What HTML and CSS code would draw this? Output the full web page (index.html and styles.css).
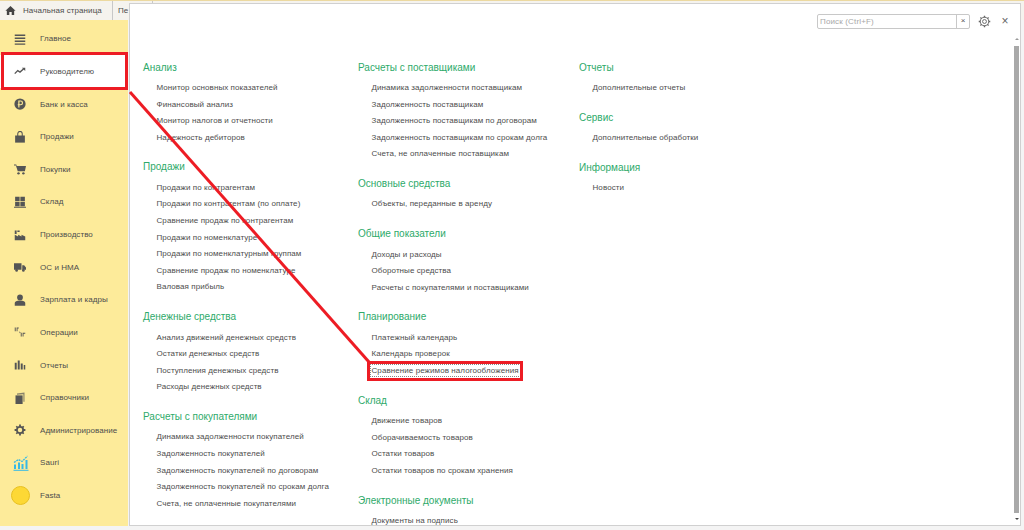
FILE: index.html
```html
<!DOCTYPE html>
<html lang="ru">
<head>
<meta charset="utf-8">
<title>Руководителю</title>
<link rel="stylesheet" href="styles.css">
</head>
<body>
<div class="app">
  <header class="tabs">
    <div class="tab">
      <svg class="home" viewBox="0 0 12 12"><path d="M6 1 L11.500 6.300 L10 6.300 L10 11 L7.300 11 L7.300 7.500 L4.700 7.500 L4.700 11 L2 11 L2 6.300 L.5 6.300 Z"/></svg>
      <span>Начальная страница</span>
    </div>
    <div class="tab tab-second"><span>Пе</span></div>
  </header>
  <div class="body">
    <nav class="side">
      <a class="nav"><svg class="ico" viewBox="0 0 16 16"><path d="M1 2h14v2H1zM1 6h14v2H1zM1 10h14v2H1zM1 14h14v1.500H1z"/></svg><span>Главное</span></a>
      <a class="nav active"><svg class="ico" viewBox="0 0 16 16"><path d="M1 11.500 L5 7.500 L8 9.500 L13 5" fill="none" stroke="#555" stroke-width="1.800"/><path d="M10.500 3.500 L15 3.500 L15 8 Z"/></svg><span>Руководителю</span></a>
      <a class="nav"><svg class="ico" viewBox="0 0 16 16"><circle cx="8" cy="8" r="7.500"/><path d="M6.500 12.500V4h2.300a2.300 2.300 0 0 1 0 5H5" fill="none" stroke="#fdeb95" stroke-width="1.600"/></svg><span>Банк и касса</span></a>
      <a class="nav"><svg class="ico" viewBox="0 0 16 16"><path d="M1.500 6h13v9.500h-13z"/><path d="M5 7V3.500a3 3 0 0 1 6 0V7" fill="none" stroke="#555" stroke-width="1.400"/></svg><span>Продажи</span></a>
      <a class="nav"><svg class="ico" viewBox="0 0 16 16"><path d="M0 2h3l.6 2H16l-1.500 7H5L2.500 3.300H0z"/><circle cx="6" cy="13.800" r="1.600"/><circle cx="12.500" cy="13.800" r="1.600"/></svg><span>Покупки</span></a>
      <a class="nav"><svg class="ico" viewBox="0 0 16 16"><path d="M1.500 1h6v6h-6zM8.500 1h6v6h-6zM1.500 8h6v5.500h-6zM8.500 8h6v5.500h-6zM0 14.300h16v1.500H0z"/></svg><span>Склад</span></a>
      <a class="nav"><svg class="ico" viewBox="0 0 16 16"><path d="M1 15V7.500l4.500 2.500V7.500l4.500 2.500V7.500l5 2.500V15zM1 2h2.500v4.500H1zM4.500 2h3v2h-3z"/></svg><span>Производство</span></a>
      <a class="nav"><svg class="ico" viewBox="0 0 16 16"><path d="M0 3h10v8.500H0zM11 5.500h2.500L16 8.500v3h-5z"/><circle cx="3.500" cy="12.500" r="1.800"/><circle cx="12.500" cy="12.500" r="1.800"/></svg><span>ОС и НМА</span></a>
      <a class="nav"><svg class="ico" viewBox="0 0 16 16"><circle cx="8" cy="4.500" r="3.800"/><path d="M1 15.500v-3.500c0-2 2.500-3.300 7-3.300s7 1.300 7 3.300v3.500z"/></svg><span>Зарплата и кадры</span></a>
      <a class="nav"><svg class="ico" viewBox="0 0 16 16"><path d="M1 2h1.300v5H1zM3.500 2h2.800v1.200H4.700V7H3.500zM9 9h1.300v5H9zM11.500 9h3.500v1.200h-2.300V14h-1.200zM6.500 7l2.500 2-1.200.5z"/></svg><span>Операции</span></a>
      <a class="nav"><svg class="ico" viewBox="0 0 16 16"><path d="M1 5h2.600v9H1zM5 2h2.600v12H5zM9 6h2.600v8H9zM13 8h2v6h-2z"/></svg><span>Отчеты</span></a>
      <a class="nav"><svg class="ico" viewBox="0 0 16 16"><path d="M2 4.500h9.500V16H2z"/><path d="M4 3.500V2L14 .5V13h-1.500V3z" opacity=".7"/></svg><span>Справочники</span></a>
      <a class="nav"><svg class="ico" viewBox="0 0 16 16"><circle cx="8" cy="8" r="4.200" fill="none" stroke="#555" stroke-width="2.400"/><path d="M6.800 .8h2.400v3H6.800zM6.800 12.200h2.400v3H6.800zM.8 6.800h3v2.400h-3zM12.200 6.800h3v2.400h-3z"/><path d="M2.300 3.800l1.500-1.500 2.200 2-1.700 1.700zM13.700 3.800l-1.500-1.500-2.200 2 1.700 1.700zM2.300 12.200l1.500 1.500 2.200-2-1.700-1.700zM13.700 12.200l-1.500 1.500-2.200-2 1.700-1.700z"/></svg><span>Администрирование</span></a>
      <a class="nav nav-sauri"><svg class="ico-lg" viewBox="0 0 16 16"><path d="M.5 15.300h15" stroke="#35b9e6" stroke-width="1" fill="none"/><path d="M1 14V9.500h2V14zM5 14V7.500h2V14zM8.500 14V9h2V14zM12.500 14V5h2V14z" fill="#35b9e6"/><path d="M1 7.500 L5.500 4.500 L9 6.500 L14.500 1" stroke="#35b9e6" stroke-width="1.300" fill="none" stroke-dasharray="2 .8"/></svg><span>Sauri</span></a>
      <a class="nav nav-coin"><span class="coin"></span><span>Fasta</span></a>
    </nav>
    <main class="panel">
      <div class="toolbar">
        <div class="search"><span class="search-text">Поиск (Ctrl+F)</span><span class="search-x">×</span></div>
        <svg class="gear" viewBox="0 0 14 14"><circle cx="7" cy="7" r="2.100" fill="none" stroke="#666" stroke-width="1"/><circle cx="7" cy="7" r="4.600" fill="none" stroke="#666" stroke-width="1"/><path d="M7 .8v1.800M7 11.400v1.800M.8 7h1.800M11.400 7h1.800M2.600 2.600l1.300 1.300M10.100 10.100l1.300 1.300M11.400 2.600l-1.300 1.300M3.900 10.100l-1.300 1.300" stroke="#666" stroke-width="1.500"/></svg>
        <span class="close">×</span>
      </div>
      <div class="cols">
        <div class="col col-1">
          <section class="grp"><h2>Анализ</h2><ul><li>Монитор основных показателей</li><li>Финансовый анализ</li><li>Монитор налогов и отчетности</li><li>Надежность дебиторов</li></ul></section>
          <section class="grp"><h2>Продажи</h2><ul><li>Продажи по контрагентам</li><li>Продажи по контрагентам (по оплате)</li><li>Сравнение продаж по контрагентам</li><li>Продажи по номенклатуре</li><li>Продажи по номенклатурным группам</li><li>Сравнение продаж по номенклатуре</li><li>Валовая прибыль</li></ul></section>
          <section class="grp"><h2>Денежные средства</h2><ul><li>Анализ движений денежных средств</li><li>Остатки денежных средств</li><li>Поступления денежных средств</li><li>Расходы денежных средств</li></ul></section>
          <section class="grp"><h2>Расчеты с покупателями</h2><ul><li>Динамика задолженности покупателей</li><li>Задолженность покупателей</li><li>Задолженность покупателей по договорам</li><li>Задолженность покупателей по срокам долга</li><li>Счета, не оплаченные покупателями</li></ul></section>
        </div>
        <div class="col col-2">
          <section class="grp"><h2>Расчеты с поставщиками</h2><ul><li>Динамика задолженности поставщикам</li><li>Задолженность поставщикам</li><li>Задолженность поставщикам по договорам</li><li>Задолженность поставщикам по срокам долга</li><li>Счета, не оплаченные поставщикам</li></ul></section>
          <section class="grp"><h2>Основные средства</h2><ul><li>Объекты, переданные в аренду</li></ul></section>
          <section class="grp"><h2>Общие показатели</h2><ul><li>Доходы и расходы</li><li>Оборотные средства</li><li>Расчеты с покупателями и поставщиками</li></ul></section>
          <section class="grp"><h2>Планирование</h2><ul><li>Платежный календарь</li><li>Календарь проверок</li><li><span class="focus">Сравнение режимов налогообложения</span></li></ul></section>
          <section class="grp"><h2>Склад</h2><ul><li>Движение товаров</li><li>Оборачиваемость товаров</li><li>Остатки товаров</li><li>Остатки товаров по срокам хранения</li></ul></section>
          <section class="grp"><h2>Электронные документы</h2><ul><li>Документы на подпись</li></ul></section>
        </div>
        <div class="col col-3">
          <section class="grp"><h2>Отчеты</h2><ul><li>Дополнительные отчеты</li></ul></section>
          <section class="grp"><h2>Сервис</h2><ul><li>Дополнительные обработки</li></ul></section>
          <section class="grp"><h2>Информация</h2><ul><li>Новости</li></ul></section>
        </div>
      </div>
      <div class="scroll"><span class="scroll-up"></span><span class="scroll-thumb"></span><span class="scroll-down"></span></div>
    </main>
  </div>
  <div class="mark mark-nav"></div>
  <div class="mark mark-link"></div>
  <svg class="arrow" viewBox="0 0 1024 530"><path d="M130 92 L369 362" stroke="#ed1c24" stroke-width="3" fill="none"/></svg>
</div>
</body>
</html>
```
FILE: styles.css
```css
* { box-sizing: border-box; }
html, body { margin: 0; padding: 0; }
body { width: 1024px; height: 530px; overflow: hidden; background: #f4f4f4; font-family: "Liberation Sans", Arial, sans-serif; font-size: 8px; color: #4d4d4d; }
.app { position: relative; width: 1024px; height: 530px; border-top: 1px solid #ecd9a0; }
.tabs { display: flex; height: 19px; background: #f5f3ee; }
.tab { display: flex; align-items: center; padding-left: 5px; gap: 7px; width: 113px; border-right: 1px solid #c8c8c8; letter-spacing: .08px; white-space: nowrap; }
.tab-second { width: 40px; padding-left: 5px; }
.home { width: 11px; height: 11px; fill: #444; flex: none; }
.body { display: flex; height: 506px; }
.side { width: 128px; background: #fdeb9a; padding-top: 2.500px; flex: none; }
.nav { display: flex; align-items: center; height: 32.640px; padding-left: 14px; gap: 13px; letter-spacing: .06px; }
.nav.active { background: #fff; }
.ico { width: 12px; height: 12px; fill: #555; flex: none; margin-right: 1px; }
.ico-lg { width: 16px; height: 16px; flex: none; margin-right: -2px; margin-left: -1px; }
.nav-coin { padding-left: 11px; gap: 10px; }
.coin { width: 19px; height: 19px; border-radius: 50%; background: #fdd835; border: 1px solid #e8c020; flex: none; }
.panel { width: 892px; margin-top: -17px; margin-left: 1px; height: 523px; background: #fff; border: 1px solid #d0d0d0; position: relative; z-index: 1; padding-top: 9px; }
.toolbar { display: flex; align-items: center; justify-content: flex-end; height: 16px; padding-right: 9px; }
.search { display: flex; width: 153px; height: 15px; border: 1px solid #c8c8c8; border-radius: 2px; color: #a8a8a8; }
.search-text { flex: 1; padding-left: 2px; line-height: 13px; letter-spacing: .15px; }
.search-x { width: 13px; border-left: 1px solid #c8c8c8; text-align: center; line-height: 12px; color: #555; }
.gear { width: 13px; height: 13px; margin-left: 8px; }
.close { width: 12px; margin-left: 8px; text-align: center; font-size: 12px; color: #666; line-height: 12px; }
.cols { display: flex; padding-left: 13px; padding-top: 30.500px; }
.col-1 { width: 215px; }
.col-2 { width: 221px; }
.grp { margin-bottom: 13px; }
.grp h2 { margin: 0; font-weight: 400; font-size: 10px; line-height: 16px; color: #2eaa6a; }
.grp ul { list-style: none; margin: 4.500px 0 0; padding: 0 0 0 13.500px; }
.grp li { height: 16.600px; line-height: 16px; letter-spacing: .08px; white-space: nowrap; }
.focus { outline: 1px dotted #888; outline-offset: 1px; }
.scroll { position: absolute; right: 1px; top: 34px; bottom: 5px; width: 5px; display: flex; flex-direction: column; align-items: center; }
.scroll-thumb { flex: 1; width: 5px; margin: 6px 0 5px; background: #a9a9a9; }
.scroll-up, .scroll-down { width: 0; height: 0; border-left: 2px solid transparent; border-right: 2px solid transparent; }
.scroll-up { border-bottom: 2px solid #999; }
.scroll-down { border-top: 2px solid #444; }
.mark { position: absolute; border: 3px solid #ed1c24; z-index: 3; }
.mark-nav { left: 1px; top: 51px; width: 127px; height: 38px; }
.mark-link { left: 367px; top: 360px; width: 156px; height: 20px; }
.arrow { position: absolute; left: 0; top: -1px; width: 1024px; height: 530px; z-index: 2; pointer-events: none; }
```
